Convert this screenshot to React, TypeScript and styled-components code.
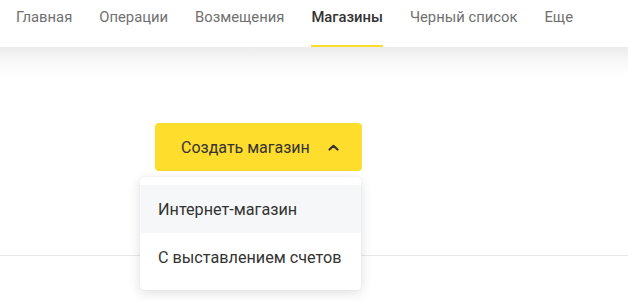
import React from "react";
import styled, { createGlobalStyle } from "styled-components";

const GlobalStyle = createGlobalStyle`
  html, body {
    margin: 0;
    padding: 0;
    background: #ffffff;
  }
  body {
    font-family: Roboto, "Liberation Sans", Arial, sans-serif;
    -webkit-font-smoothing: antialiased;
  }
`;

const Page = styled.div`
  width: 628px;
  height: 301px;
  overflow: hidden;
  background: #ffffff;
`;

const Nav = styled.nav`
  height: 47px;
  display: flex;
  align-items: stretch;
  gap: 27px;
  padding: 0 16px;
  background: #ffffff;
`;

const NavItem = styled.a<{ $active?: boolean }>`
  display: flex;
  align-items: center;
  height: 47px;
  padding-bottom: 12px;
  box-sizing: border-box;
  font-size: 14.8px;
  white-space: nowrap;
  color: ${({ $active }) => ($active ? "#333333" : "#707070")};
  font-weight: ${({ $active }) => ($active ? 500 : 400)};
  text-decoration: none;
  border-bottom: 2px solid ${({ $active }) => ($active ? "#ffdd2d" : "transparent")};
  cursor: pointer;
`;

const Main = styled.main`
  height: 254px;
  padding-top: 76px;
  box-sizing: border-box;
  background: linear-gradient(to bottom, #ebebeb 0, #f8f8f8 14px, #ffffff 30px);
`;

const ButtonWrap = styled.div`
  position: relative;
  width: 207px;
  margin-left: 155px;
`;

const CreateButton = styled.button`
  width: 207px;
  height: 48px;
  display: flex;
  align-items: center;
  justify-content: flex-start;
  gap: 18px;
  padding: 0 0 0 26px;
  border: 0;
  border-radius: 4px;
  background: #ffdd2d;
  color: #333333;
  font-family: Roboto, "Liberation Sans", Arial, sans-serif;
  font-size: 16px;
  white-space: nowrap;
  cursor: pointer;
`;

const Chevron = styled.svg`
  width: 11px;
  height: 7px;
  margin-top: 1px;
`;

const Menu = styled.ul`
  position: absolute;
  top: 54px;
  right: 1px;
  width: 221px;
  margin: 0;
  padding: 8px 0 9px;
  list-style: none;
  background: #ffffff;
  border-radius: 4px;
  box-shadow: 0 3px 12px rgba(0, 0, 0, 0.13), 0 0 1px rgba(0, 0, 0, 0.12);
  z-index: 2;
`;

const MenuItem = styled.li<{ $hover?: boolean }>`
  height: 48px;
  display: flex;
  align-items: center;
  padding: 0 0 0 18px;
  font-size: 16.2px;
  white-space: nowrap;
  color: #333333;
  background: ${({ $hover }) => ($hover ? "#f6f7f8" : "#ffffff")};
  cursor: pointer;
`;

const Divider = styled.hr`
  margin: 0;
  border: 0;
  border-top: 1px solid #e8e8e8;
`;

const Below = styled.div`
  padding-top: 84px;
`;

const navItems = ["Главная", "Операции", "Возмещения", "Магазины", "Черный список", "Еще"];

export default function App() {
  return (
    <Page>
      <GlobalStyle />
      <Nav>
        {navItems.map((item) => (
          <NavItem key={item} $active={item === "Магазины"}>
            {item}
          </NavItem>
        ))}
      </Nav>
      <Main>
        <ButtonWrap>
          <CreateButton>
            Создать магазин
            <Chevron viewBox="0 0 11 7">
              <path d="M1.5 5.5 L5.5 1.8 L9.5 5.5" fill="none" stroke="#333" strokeWidth="2.2" strokeLinecap="round" strokeLinejoin="round" />
            </Chevron>
          </CreateButton>
          <Menu>
            <MenuItem $hover>Интернет-магазин</MenuItem>
            <MenuItem>С выставлением счетов</MenuItem>
          </Menu>
        </ButtonWrap>
        <Below>
          <Divider />
        </Below>
      </Main>
    </Page>
  );
}
